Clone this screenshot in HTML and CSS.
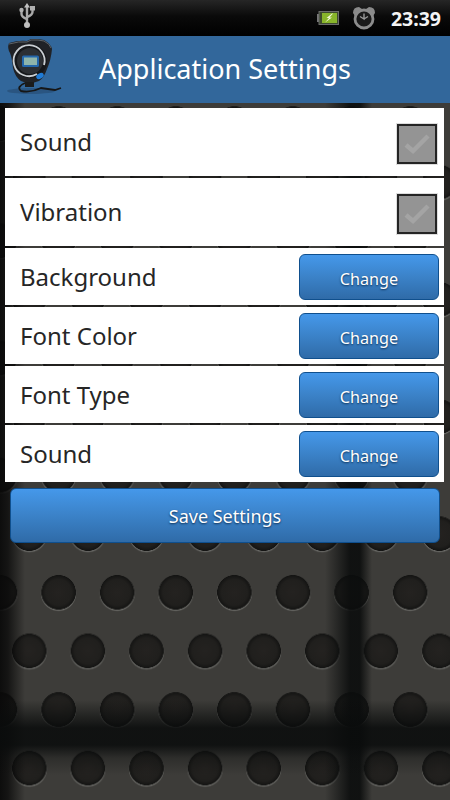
FILE: index.html
```html
<!DOCTYPE html>
<html lang="en">
<head>
<meta charset="utf-8">
<title>Application Settings</title>
<link rel="stylesheet" href="styles.css">
</head>
<body>
<div class="status">
  <svg class="usb" width="16" height="25" viewBox="0 0 16 25"><g fill="none" stroke="#a8a8a8" stroke-width="2.400"><path d="M8 4V22"/><path d="M2.500 8V11Q2.500 14 8 16"/><path d="M13.500 6V9Q13.500 12 8 14"/></g><path d="M8 0L11 4.500H5Z" fill="#c0c0c0"/><circle cx="2.500" cy="7" r="2.200" fill="#b0b0b0"/><rect x="11" y="3" width="5" height="4.500" fill="#b0b0b0"/><circle cx="8" cy="22" r="3" fill="#c0c0c0"/></svg>
  <div class="status-right">
    <svg class="battery" width="22" height="14" viewBox="0 0 22 14"><rect x="0" y="3" width="2" height="8" fill="#777"/><rect x="2" y="0.500" width="19.500" height="13" fill="#3d4a2c" stroke="#6b6b6b"/><rect x="5" y="2" width="15" height="10" fill="#88b52a"/><path d="M15 2.500L9.500 7H12L8 11.500L15 6.500H12.500L16 2.500Z" fill="#f1f8d8"/></svg>
    <svg class="alarm" width="24" height="24" viewBox="0 0 24 24"><path d="M1 7Q1 1 7 1L10 3L3 10Z" fill="#8a8a8a"/><path d="M23 7Q23 1 17 1L14 3L21 10Z" fill="#8a8a8a"/><circle cx="12" cy="13" r="9" fill="#1a1a1a" stroke="#8c8c8c" stroke-width="2.800"/><path d="M12 7.500V13L8 10.500M12 13L16 10.500" stroke="#999" stroke-width="1.400" fill="none"/></svg>
    <span class="clock">23:39</span>
  </div>
</div>
<header class="appbar">
  <svg class="watch" width="62" height="62" viewBox="0 0 62 62">
    <ellipse cx="30" cy="53" rx="24" ry="3" fill="#264f76" opacity="0.7"/>
    <path d="M24 45Q15 49 20 53Q30 55 40 50L54 52L60 50" fill="none" stroke="#161616" stroke-width="1.800"/>
    <path d="M8 5Q18 2 26 3L30 1H37L43 2Q50 6 51 11Q50 22 46 31Q43 40 38 43Q28 47 20 43Q14 39 12 30Q11 20 9 15Q6 10 8 5Z" fill="#202226"/>
    <path d="M8 6Q18 3 26 4L30 2H37L43 3Q49 6 50 10" fill="none" stroke="#5f6469" stroke-width="1"/>
    <circle cx="29" cy="23" r="17" fill="#15171a"/>
    <path d="M36 36A15.500 15.500 0 1 1 43 27" fill="none" stroke="#c9ced2" stroke-width="1.800"/>
    <circle cx="29" cy="23" r="13" fill="#2c2f33"/>
    <rect x="21" y="17.500" width="17" height="11.500" rx="1.500" fill="#2467ab"/>
    <rect x="23" y="19.500" width="13" height="7.500" fill="#8fb5ab"/>
    <ellipse cx="39" cy="38" rx="4" ry="2.700" fill="#1f7bd6" transform="rotate(-30 39 38)"/>
    <rect x="24" y="44" width="9" height="5" fill="#1b1b1b"/>
  </svg>
  <h1 class="title">Application Settings</h1>
</header>
<main class="panel">
  <div class="row row-tall"><span class="label">Sound</span><span class="check"><svg width="28" height="24" viewBox="0 0 28 24"><path d="M3 13L10 19L25 4" fill="none" stroke="#a4a4a4" stroke-width="4.500"/></svg></span></div>
  <div class="row row-tall"><span class="label">Vibration</span><span class="check"><svg width="28" height="24" viewBox="0 0 28 24"><path d="M3 13L10 19L25 4" fill="none" stroke="#a4a4a4" stroke-width="4.500"/></svg></span></div>
  <div class="row"><span class="label">Background</span><button class="btn btn-small">Change</button></div>
  <div class="row"><span class="label">Font Color</span><button class="btn btn-small">Change</button></div>
  <div class="row"><span class="label">Font Type</span><button class="btn btn-small">Change</button></div>
  <div class="row"><span class="label">Sound</span><button class="btn btn-small">Change</button></div>
  <button class="btn btn-save">Save Settings</button>
</main>
</body>
</html>
```
FILE: styles.css
```css
html, body {
  margin: 0;
  padding: 0;
}
body {
  width: 450px;
  height: 800px;
  overflow: hidden;
  font-family: "Noto Sans", "Open Sans", sans-serif;
  background-color: #3d3c39;
  background-image:
    linear-gradient(180deg, transparent 700px, rgba(10,12,12,.88) 728px, rgba(10,12,12,.88) 745px, rgba(10,12,12,.3) 758px, transparent 775px),
    linear-gradient(90deg, rgba(8,8,8,.9) 0, rgba(8,8,8,.75) 8px, transparent 25px, transparent 325px, rgba(10,12,12,.88) 350px, rgba(10,12,12,.88) 360px, transparent 372px),
    radial-gradient(circle at 29.3px 29.3px, #242220 0, #201f1d 13px, #141413 17px, transparent 17.600px),
    radial-gradient(circle at 29.3px 30.300px, #7c7c78 16.500px, transparent 18px),
    radial-gradient(circle at 29.3px 29.3px, #242220 0, #201f1d 13px, #141413 17px, transparent 17.600px),
    radial-gradient(circle at 29.3px 30.300px, #7c7c78 16.500px, transparent 18px);
  background-size: 450px 800px, 450px 800px, 58.6px 117.2px, 58.6px 117.2px, 58.6px 117.2px, 58.6px 117.2px;
  background-position: 0 0, 0 0, 0 35.7px, 0 35.7px, -29.3px 94.3px, -29.3px 94.3px;
  background-repeat: no-repeat, no-repeat, repeat, repeat, repeat, repeat;
}
.status {
  height: 36px;
  display: flex;
  align-items: center;
  justify-content: space-between;
  padding: 0 9px 0 19px;
  background: linear-gradient(180deg, #262626 0, #0a0a0a 45%, #000 100%);
  box-sizing: border-box;
}
.usb { margin-top: -5px; }
.status-right {
  display: flex;
  align-items: center;
}
.battery { margin-right: 13px; }
.alarm { margin-right: 15px; margin-top: -1px; }
.clock {
  color: #f4f4f4;
  font-size: 19.500px;
  font-weight: 700;
  font-family: "Noto Sans", sans-serif;
}
.appbar {
  height: 67px;
  background: #32679b;
  display: flex;
  align-items: center;
  padding-left: 1px;
  box-sizing: border-box;
}
.watch { margin-top: -1px; flex: none; }
.title {
  margin: -3px 0 0 36px;
  color: #fff;
  font-size: 27px;
  font-weight: 400;
}
.panel {
  display: flex;
  flex-direction: column;
  padding: 5px 6px 0 5px;
  gap: 2px;
}
.row {
  background: #fff;
  height: 57px;
  display: flex;
  align-items: center;
  justify-content: space-between;
  padding: 0 5px 0 15px;
  box-sizing: border-box;
}
.row-tall {
  height: 68px;
  padding-right: 7px;
}
.row-tall .label {
  margin-top: -2px;
}
.label {
  color: #262626;
  font-size: 24px;
}
.check {
  width: 36px;
  height: 36px;
  background: #949494;
  border: 2px solid #242424;
  box-shadow: 0 0 0 1px #ddd;
  display: flex;
  align-items: center;
  justify-content: center;
  margin-top: 3px;
}
.btn {
  border: 1px solid #0f4f8d;
  border-radius: 6px;
  background: linear-gradient(180deg, #4598ea 0, #3b82c8 50%, #2f6ba8 100%);
  color: #fff;
  font-family: "Noto Sans", "Open Sans", sans-serif;
  text-shadow: 0 1px 2px #0c2f55;
  padding: 0;
  cursor: pointer;
}
.btn-small {
  width: 140px;
  height: 46px;
  padding-top: 4px;
  font-size: 16.200px;
}
.btn-save {
  width: 430px;
  height: 55px;
  margin: 4px 0 0 5px;
  font-size: 18px;
}
```
